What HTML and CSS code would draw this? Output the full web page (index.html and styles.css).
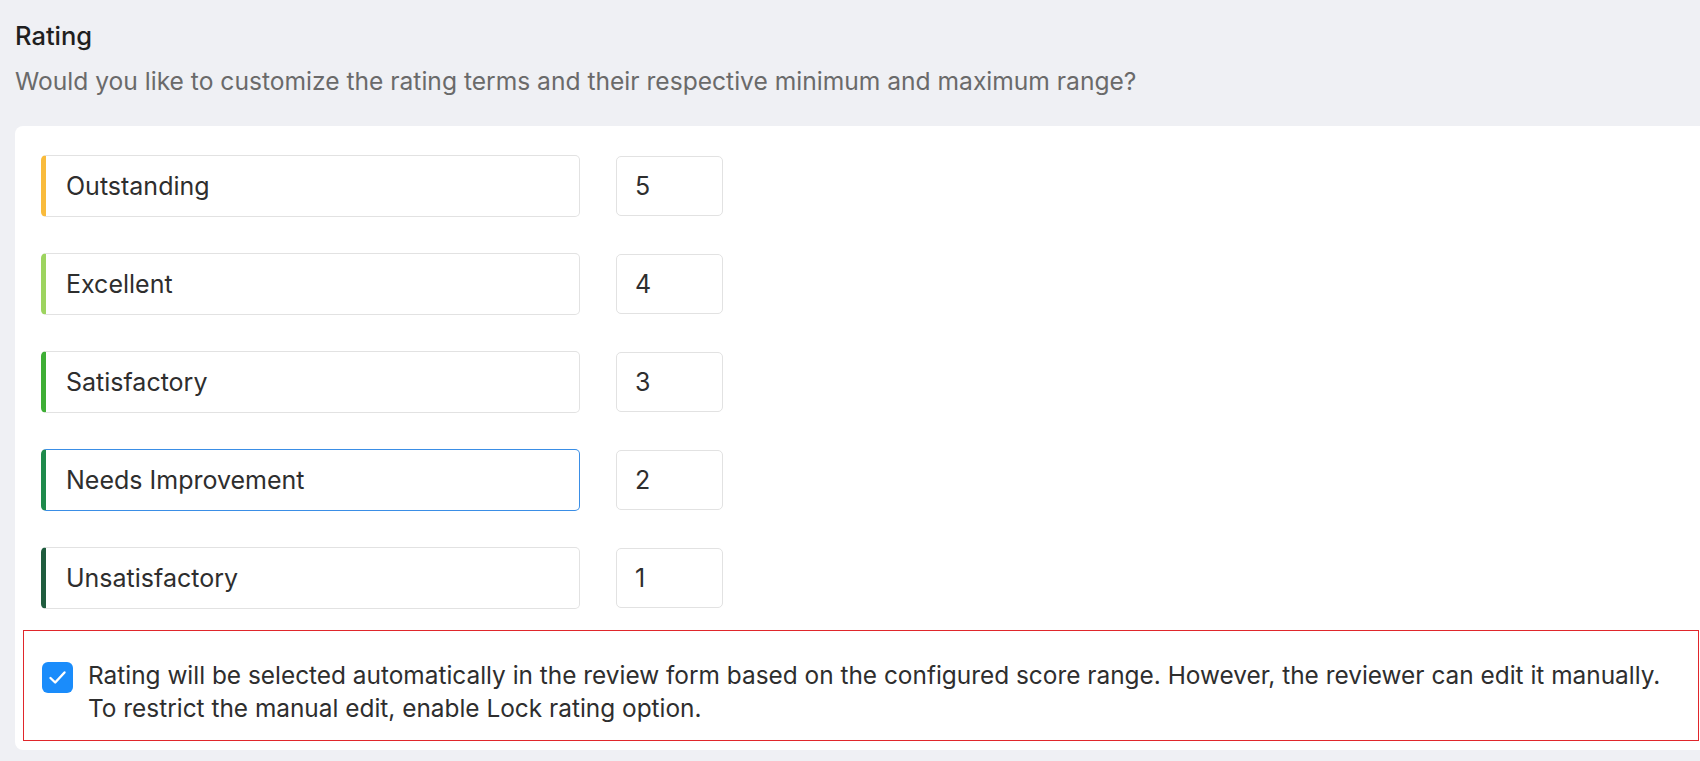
FILE: index.html
```html
<!DOCTYPE html>
<html lang="en">
<head>
<meta charset="utf-8">
<title>Rating</title>
<link rel="stylesheet" href="styles.css">
</head>
<body>
<div class="page">
  <header class="head">
    <h1 class="title">Rating</h1>
    <p class="subtitle">Would you like to customize the rating terms and their respective minimum and maximum range?</p>
  </header>
  <section class="card">
    <div class="rows">
      <div class="row">
        <div class="term bar-1">Outstanding</div>
        <div class="num">5</div>
      </div>
      <div class="row">
        <div class="term bar-2">Excellent</div>
        <div class="num">4</div>
      </div>
      <div class="row">
        <div class="term bar-3">Satisfactory</div>
        <div class="num">3</div>
      </div>
      <div class="row">
        <div class="term bar-4 focused">Needs Improvement</div>
        <div class="num">2</div>
      </div>
      <div class="row">
        <div class="term bar-5">Unsatisfactory</div>
        <div class="num">1</div>
      </div>
    </div>
    <div class="notice">
      <span class="check">
        <svg viewBox="0 0 31 31" width="31" height="31"><path d="M8.5 16 L13.2 20.5 L22.5 10.5" fill="none" stroke="#fff" stroke-width="2.4" stroke-linecap="round" stroke-linejoin="round"/></svg>
      </span>
      <p class="notice-text">Rating will be selected automatically in the review form based on the configured score range. However, the reviewer can edit it manually.<br>To restrict the manual edit, enable Lock rating option.</p>
    </div>
  </section>
</div>
</body>
</html>
```

FILE: styles.css
```css
* { box-sizing: border-box; }
html, body {
  margin: 0;
  padding: 0;
  background: #eff0f4;
  font-family: Inter, "Noto Sans", sans-serif;
  overflow: hidden;
}
.page {
  width: 1700px;
  height: 761px;
  padding-top: 21px;
}
.head {
  padding-left: 15px;
}
.title {
  margin: 0;
  font-size: 25.5px;
  line-height: 30px;
  font-weight: 500;
  color: #1f1f1f;
}
.subtitle {
  margin: 15px 0 0;
  font-size: 24.6px;
  line-height: 30px;
  color: #6a6a6a;
}
.card {
  margin: 30px 0 0 15px;
  background: #fff;
  border-radius: 8px 0 0 8px;
  padding: 29px 0 9px 0;
}
.rows {
  display: flex;
  flex-direction: column;
  gap: 36px;
  padding-left: 26px;
}
.row {
  display: flex;
  align-items: center;
  gap: 36px;
}
.term {
  width: 539px;
  height: 62px;
  border: 1px solid #e2e2e2;
  border-left: 5px solid #f8bb38;
  border-radius: 5px;
  padding-left: 20px;
  display: flex;
  align-items: center;
  font-size: 25px;
  color: #2e2e2e;
}
.bar-1 { border-left-color: #f9bb3c; }
.bar-2 { border-left-color: #9dd45f; }
.bar-3 { border-left-color: #3eae35; }
.bar-4 { border-left-color: #1e8a4b; }
.bar-5 { border-left-color: #1f5c3e; }
.term.focused {
  border-top-color: #3a8ee6;
  border-right-color: #3a8ee6;
  border-bottom-color: #3a8ee6;
}
.num {
  width: 107px;
  height: 60px;
  border: 1px solid #e2e2e2;
  border-radius: 5px;
  padding-left: 18px;
  display: flex;
  align-items: center;
  font-size: 25px;
  color: #2e2e2e;
}
.notice {
  margin: 21px 1px 0 8px;
  border: 1px solid #e0262b;
  height: 111px;
  padding: 28px 0 0 18px;
  display: flex;
  align-items: flex-start;
  gap: 15px;
}
.check {
  flex: none;
  width: 31px;
  height: 31px;
  margin-top: 3px;
  border-radius: 6px;
  background: #1a8cfb;
  display: block;
}
.check svg { display: block; }
.notice-text {
  margin: 0;
  font-size: 24.4px;
  line-height: 33px;
  color: #2e2e2e;
}
```
